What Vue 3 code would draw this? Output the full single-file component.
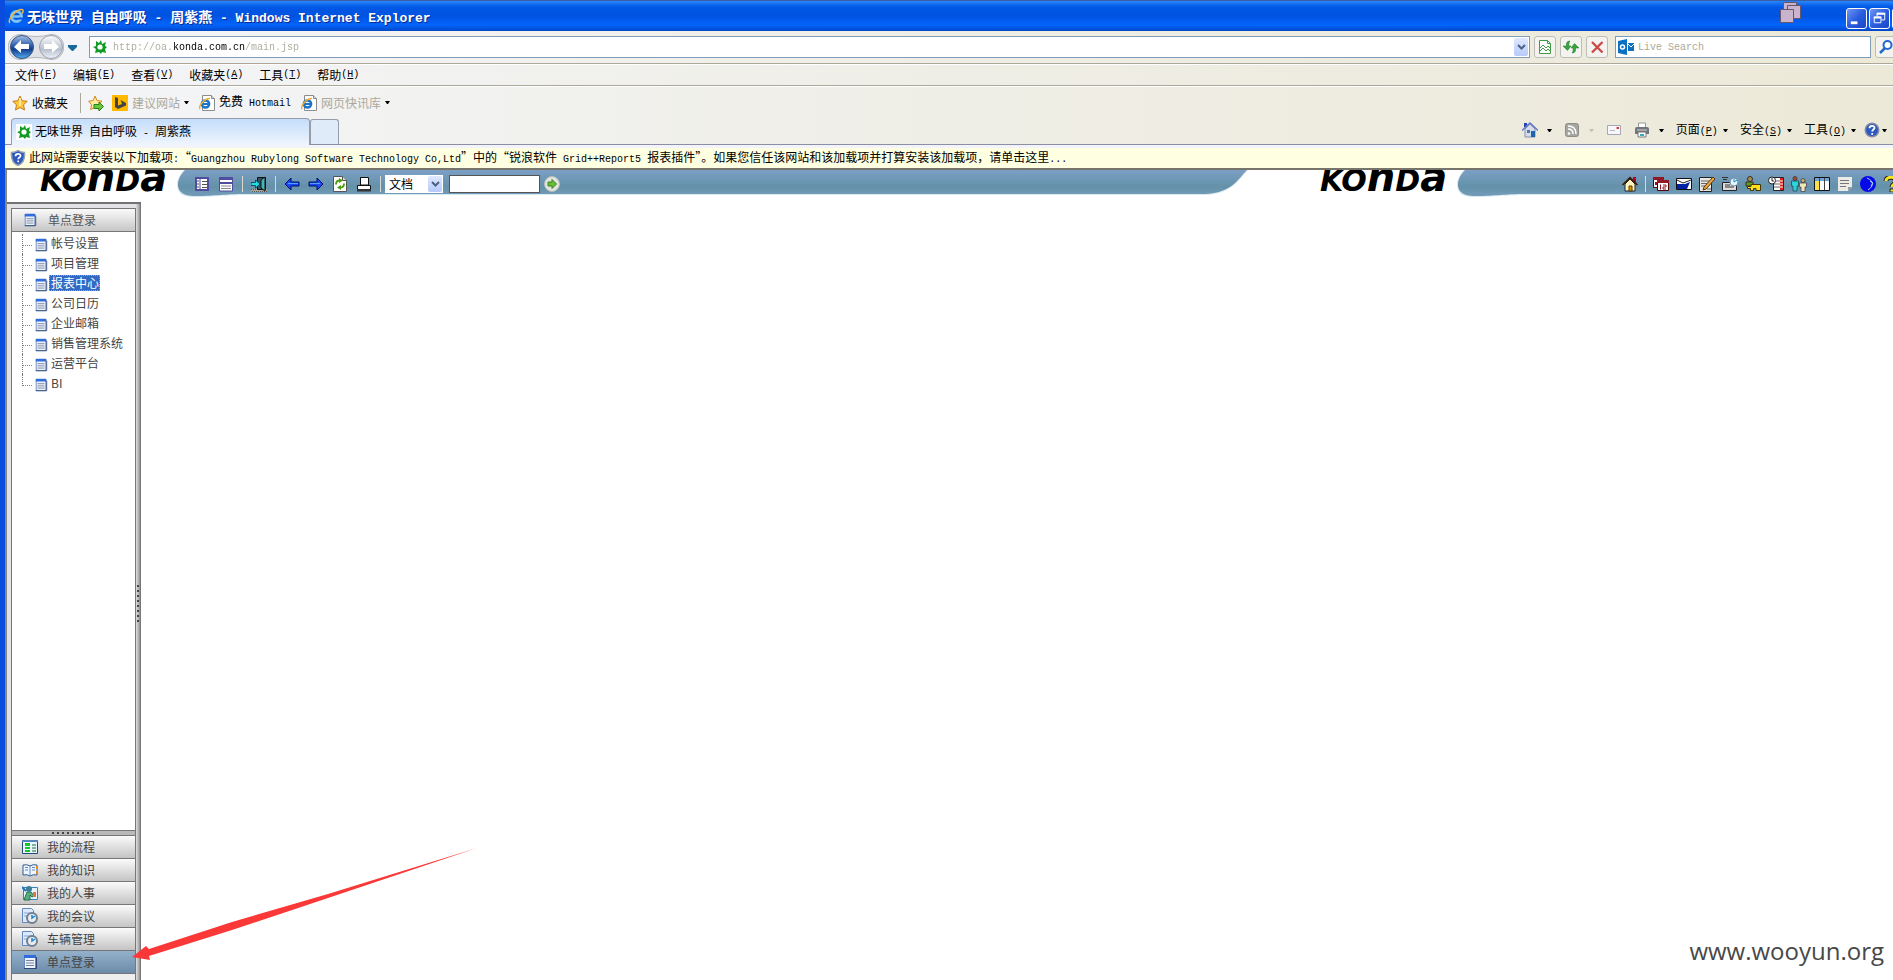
<script setup>
import { h, ref } from 'vue'

// Splits mixed text so that Latin runs sit on a half-width grid beside the Chinese.
const Mixed = (props) =>
  h('span', { class: 'mixed' }, props.text.split(/([\x20-\x7e]+)/).filter(Boolean).map((run) =>
    /^[\x20-\x7e]+$/.test(run) ? h('span', { class: 'latin' }, run) : run))
Mixed.props = ['text']

const art = {
  ie: '<circle cx="8.500" cy="8.500" r="5" fill="none" stroke="#7cc4f6" stroke-width="3"/><path d="M4 8.500h9.500" stroke="#7cc4f6" stroke-width="2.500"/><path d="M11 10.500h4" stroke="#0858e8" stroke-width="2"/><path d="M2 15C-1 12 8 1 14 1.500c2 .3 1 3 0 4" fill="none" stroke="#f0b73a" stroke-width="1.500"/>',
  iepage: '<path d="M3.500.5h9l3 3v12h-12z" fill="#fff" stroke="#8c8c8c"/><path d="M12.500.5v3h3" fill="#ddd" stroke="#8c8c8c"/><circle cx="6.500" cy="9" r="3.600" fill="none" stroke="#1974ca" stroke-width="2.500"/><path d="M3 9h7.500" stroke="#1974ca" stroke-width="2"/><path d="M1 14C-1 11 6 3 11 3.500" fill="none" stroke="#eead35" stroke-width="1.500"/>',
  site: '<rect width="16" height="16" fill="#fff"/><path d="M4 2l3 2 2-3 1 4 4-2-1 4 2 1-2 2 1 4-4-1-1 2-2-2-4 1 1-4-3-2 3-1z" fill="#119a24"/><circle cx="8" cy="8" r="2.600" fill="#fff"/>',
  star: '<path d="M8 1l2.200 4.700 5 .6-3.700 3.500 1 5.200L8 12.500 3.500 15l1-5.200L.8 6.300l5-.6z" fill="#ffc83b" stroke="#c77a13"/><path d="M8 3v8" stroke="#ffe79a" stroke-width="2"/>',
  starAdd: '<path d="M7 1l2 4.500 5 .7-3.500 3.300 1 5L7 12.500 2.700 14.500l.8-4.700L.7 6.200l4.500-.7z" fill="#ffe9a0" stroke="#d08a1c"/><path d="M6 9.500h5V7l4.500 4.500L11 16v-2.500H6z" fill="#68c83c" stroke="#23851c"/>',
  bing: '<rect width="16" height="16" fill="#ffb900"/><path d="M3 2l3 1v7.500L10 9 8.500 5 14 8v2.500L6 14l-3-2z" fill="#444"/>',
  home: '<path d="M2 1h3v4H2z" fill="#2442b8"/><path d="M3 7l5-5 5 5v8H3z" fill="#d4dcec" stroke="#8490ad"/><path d="M0 8.500L8 1l8 7.500" fill="none" stroke="#6878c8" stroke-width="1.500"/><path d="M9 9h4v6H9z" fill="#1f65ac"/><path d="M5 8h3v3H5z" fill="#5478a8"/>',
  rss: '<rect x="1.500" y="1.500" width="13" height="13" rx="2" fill="#a5a5a0" stroke="#8e8e89"/><circle cx="5" cy="11.500" r="1.300" fill="#fff"/><path d="M4 7c3 0 5 2 5 5M4 4c5 0 8 3 8 8" fill="none" stroke="#fff" stroke-width="1.500"/>',
  mail: '<path d="M1.500 3.500h13v9h-13z" fill="#f7f7fb" stroke="#a7a7b7"/><path d="M10.500 5h2.500v2h-2.500z" fill="#d83b37"/><path d="M4 8.500h5" stroke="#b8b8c4"/>',
  print: '<path d="M4.500 6V1h7v5" fill="#fff" stroke="#999"/><path d="M1 7q0-2 2-2h10q2 0 2 2v5H1z" fill="#70747b"/><path d="M3 8h10" stroke="#d3d5da"/><path d="M4 10h8v5H4z" fill="#fff" stroke="#777"/><path d="M6 13h4" stroke="#37a9b8" stroke-width="2"/>',
  help: '<circle cx="8" cy="8" r="7.500" fill="#858ea5"/><circle cx="8" cy="8" r="6" fill="#2c59bd"/><path d="M5.500 6.300C5.500 3 11 3.300 10.500 6c-.3 1.600-2.300 1.500-2.300 3.600M8.200 11v1.700" fill="none" stroke="#fff" stroke-width="1.800"/>',
  shield: '<path d="M8 .5c2 1.500 4 2 6.500 2 .5 6-1 11-6.500 13C2.500 13.500 1 8.500 1.500 2.500 4 2.500 6 2 8 .5z" fill="#2d5ac0" stroke="#9aa1b2" stroke-width="1.500"/><path d="M5.500 6.300C5.500 3 11 3.300 10.500 6c-.3 1.600-2.300 1.500-2.300 3.200M8.200 10.500v1.700" fill="none" stroke="#fff" stroke-width="1.700"/>',
  pageBroken: '<path d="M2.500 1.500h8l3 3v10h-11z" fill="#fff" stroke="#3e9b43"/><path d="M10.500 1.500v3h3M3 9l3-3 3 3 2-2 2 2M3 12l3-3 3 3 2-2 2 2" fill="none" stroke="#3e9b43"/>',
  swap: '<path d="M7 2C4 2 3 4 3.500 7H0l4.500 4.500L8 7H6c-.5-2 0-4 1-5zM9 14c3 0 4-2 3.500-5H16l-4.500-4.500L8 9h2c.5 2 0 4-1 5z" fill="#37a63b" stroke="#1d742a" stroke-width=".5"/>',
  stop: '<path d="M3 3l10.500 10.500M13.500 3L3 13.500" stroke="#c94a48" stroke-width="2.300"/>',
  outlook: '<path d="M0 2l9-2v16l-9-2z" fill="#0b6fc2"/><circle cx="4.500" cy="8" r="2" fill="none" stroke="#fff" stroke-width="1.500"/><path d="M10 4h6v8h-6z" fill="#0b6fc2"/><path d="M10 5l3 3 3-3" fill="none" stroke="#fff"/>',
  find: '<circle cx="9.500" cy="6" r="4" fill="#fff" stroke="#2467cf" stroke-width="2"/><path d="M7 9l-5 5" stroke="#2467cf" stroke-width="2.500"/>',
  listLeft: '<path d="M1 1h14v14H1z" fill="#fff"/><path d="M2 2h12v12H2z" fill="none" stroke="#504ca0" stroke-width="2"/><path d="M6 2v12" stroke="#504ca0"/><path d="M3 5h2M3 8h2M3 11h2M8 5.500h5M8 8.500h5M8 11.500h5" stroke="#555"/>',
  listTop: '<path d="M1 1h14v14H1z" fill="#fff"/><path d="M1 1h14v3H1zM1 6h14v2H1z" fill="#504ca0"/><path d="M1.500 2v13h13V2" fill="none" stroke="#504ca0"/><path d="M3 10h10M3 12.500h10" stroke="#888"/>',
  door: '<path d="M0 13h16v3H0z" fill="#aaa894"/><path d="M0 13.500h16M1 15.500h15" stroke="#555" stroke-dasharray="1 1"/><path d="M6.500 1.500h8v12h-8z" fill="#2c5560" stroke="#111"/><path d="M10 4l4-3v14l-4-3z" fill="#45b5b5" stroke="#111"/><path d="M0 6.500h4.500V4L9 8l-4.500 4V9.500H0z" fill="#1ee0e8" stroke="#123" stroke-width=".7"/>',
  left: '<path d="M1 8l6-6v4h8v4H7v4z" fill="#1649f5" stroke="#050c66"/><path d="M4 7.500h10" stroke="#54a0ff"/>',
  right: '<path d="M15 8L9 2v4H1v4h8v4z" fill="#1649f5" stroke="#050c66"/><path d="M2 7.500h10" stroke="#54a0ff"/>',
  refresh: '<path d="M1.500.5h9l4 4v11h-13z" fill="#fff" stroke="#555"/><path d="M10.500.5v4h4" fill="#ddd" stroke="#555"/><path d="M4 8.500C4 5.500 5 4.500 7.500 4.500M12 7.500c0 3-1 4-3.500 4" fill="none" stroke="#4e9c0c" stroke-width="1.800"/><path d="M7 2l4 2.500L7 7zM9 9v5l-4-2.500z" fill="#4e9c0c"/>',
  pagePrint: '<path d="M4.500 1.500h7v8h-7z" fill="#fff" stroke="#111"/><path d="M1.500 9.500h13v4h-13z" fill="#fff" stroke="#111"/><path d="M4.500 1.500h8v7.500h-8z" fill="#fff" stroke="#111"/><path d="M1 13h14v2.500H1z" fill="#333"/>',
  go: '<ellipse cx="8" cy="8" rx="7.500" ry="7.500" fill="#e3e3df" stroke="#b7bdb8"/><path d="M4 6h4V3.500L12.500 8 8 12.500V10H4z" fill="#6abb35" stroke="#36871e"/>',
  house: '<path d="M11 1h3v6h-3z" fill="#c80020"/><path d="M3 8l5-5 5 5v7H3z" fill="#fff3bd" stroke="#222"/><path d="M.5 9L8 1.500 15.500 9" fill="none" stroke="#3b1500" stroke-width="1.500"/><path d="M7 10h3v5H7z" fill="#d39c00" stroke="#5a3600"/>',
  calendar: '<path d="M.5 1.500h10v10H.5z" fill="#fff" stroke="#68000c"/><path d="M0 1h11v3H0zM2 6h2v3H2z" fill="#941725"/><path d="M4.500 4.500h11v10h-11z" fill="#fff" stroke="#4d0008"/><path d="M4 4h12v3H4z" fill="#941725"/><path d="M7.500 8.500v5M10 9h3v2h-3v2h3" fill="none" stroke="#941725"/>',
  letter: '<path d="M.5 2.500h15v11H.5z" fill="#fff" stroke="#111"/><path d="M1 4l6 3 8-3" fill="none" stroke="#222"/><path d="M1 8h8l5-2-3 7H1z" fill="#0020a8"/>',
  write: '<path d="M.5 1.500h12v14H.5z" fill="#e8e8e2" stroke="#222"/><path d="M2 5h8M2 7.500h6M2 10h4M8 13h4" stroke="#666"/><path d="M14 1l2 2-9 10-3 1 1-3z" fill="#eea73b" stroke="#583514"/>',
  timeCard: '<path d="M0 1.500h6M1 3.500h4" stroke="#333"/><path d="M.5 6.500h14v8H.5z" fill="#ddd" stroke="#222"/><path d="M3 9h5M3 11h9" stroke="#333"/><circle cx="12" cy="6" r="4" fill="#def6ff" stroke="#7b8ca0"/><path d="M12 3v3l3-2" fill="none" stroke="#1987c2"/>',
  boxes: '<circle cx="5" cy="3" r="2.500" fill="#a98a58" stroke="#332"/><path d="M1 6h7v4H1z" fill="#629b22" stroke="#332"/><path d="M2.500 10.500H6v-2h9.500v6H11v-2H8.500v2h-3v-2h-3z" fill="#ffdf20" stroke="#443500"/>',
  board: '<path d="M5.500 1.500h10v13h-10z" fill="#fff" stroke="#222"/><path d="M6 5h8M6 8h8M6 11h8" stroke="#666"/><path d="M12 2h3v12h-3z" fill="#e42018"/><path d="M12 5h3M12 8h3M12 11h3" stroke="#fff"/><circle cx="4" cy="4.500" r="3.500" fill="#fff" stroke="#222"/><path d="M4 2v3h2" fill="none" stroke="#222"/>',
  people: '<circle cx="4" cy="2.500" r="2" fill="#a8502c" stroke="#222" stroke-width=".6"/><path d="M.5 5h7v5H6v5H2v-5H.5z" fill="#2cd3da" stroke="#153d48" stroke-width=".7"/><circle cx="12" cy="4.500" r="2" fill="#d8ae64" stroke="#222" stroke-width=".6"/><path d="M8.500 7h7v4H14v4.500h-4V11H8.500z" fill="#f0e6b0" stroke="#3c3550" stroke-width=".7"/>',
  columns: '<path d="M.5 1.500h15v13H.5z" fill="#fff" stroke="#111"/><path d="M1 2h14v3H1z" fill="#6da5d8"/><path d="M1 5h5v9H1z" fill="#fae14d"/><path d="M5.500 2v12M10.500 2v12" stroke="#444"/>',
  note: '<path d="M1 1h14v10l-4 4H1z" fill="#eaeae7"/><path d="M15 11h-4v4z" fill="#999"/><path d="M3 4.500h9M3 7.500h9M3 10.500h6" stroke="#777"/>',
  moon: '<circle cx="8" cy="8" r="8" fill="#0709e6"/><path d="M7 2c7 3 7 8 1 12M10 5l3 2-2 3" fill="none" stroke="#a3d8ff"/>',
  question: '<path d="M3 5c0-5 10-5 10 0 0 3-4 3-4 6" fill="none" stroke="#222" stroke-width="5"/><path d="M3 5c0-5 10-5 10 0 0 3-4 3-4 6" fill="none" stroke="#f6e322" stroke-width="3"/><path d="M7 13h4v3H7z" fill="#f6e322" stroke="#222"/>',
  doc: '<path d="M2.500 1.500h11v13h-11z" fill="#edf2fb" stroke="#6485be"/><path d="M2 1h12v3H2z" fill="#326cdc"/><path d="M4 6.500h8M4 9h8M4 11.500h8" stroke="#74839e"/><path d="M2 14.500h12.500V3" fill="none" stroke="#2d4877"/>',
  flow: '<path d="M.5 1.500h15v13H.5z" fill="#e9f5ff" stroke="#224b76"/><path d="M0 1h16v2H0z" fill="#5a83bb"/><path d="M3 4h5v3H3zM3 8h5v2H3zM3 11h5v2H3z" fill="#18c626"/><path d="M10 6h4M10 9h4M10 12h4" stroke="#176c34"/>',
  book: '<path d="M1 3q4-1 7 1 3-2 7-1v10q-4-1-7 1-3-2-7-1z" fill="#edf6ff" stroke="#345b90"/><path d="M8 4v10M3 5.500h3M3 8h3M10 5.500h3M10 8h3" fill="none" stroke="#648abf"/><path d="M14 4h2v3h-2zM14 9h2v3h-2z" fill="#e68a26"/>',
  person: '<path d="M1.500 2.500h14v12h-14z" fill="#e6f3ff" stroke="#3c80c4"/><path d="M2 15l3-8h4l3 4-2 1-2-2v5z" fill="#5cae7c" stroke="#20754c"/><circle cx="7" cy="4" r="3" fill="#3c7f96"/><path d="M11 7h3v5h-3z" fill="#ee7136"/><path d="M0 2l4 4" stroke="#2475bd" stroke-width="2"/>',
  meeting: '<path d="M.5.5h9l2 2v12H.5z" fill="#dce9fb" stroke="#6288bc"/><path d="M2 5h7M2 8h3" stroke="#85a6d2"/><circle cx="10" cy="10" r="5" fill="#e9edf1" stroke="#718091" stroke-width="2"/><path d="M10 7v3l3-2" fill="none" stroke="#1c83d1" stroke-width="1.500"/>'
}
const Icon = (props) => h('svg', { class: 'icon', viewBox: '0 0 16 16', 'aria-hidden': 'true', innerHTML: art[props.name] })
Icon.props = ['name']
const Caret = () => h('svg', { class: 'caret', viewBox: '0 0 5 3', 'aria-hidden': 'true' }, [h('path', { d: 'M0 0h5L3 3H2z', fill: 'currentColor' })])

const menus = [['文件', 'F'], ['编辑', 'E'], ['查看', 'V'], ['收藏夹', 'A'], ['工具', 'T'], ['帮助', 'H']]
const pageTools = [['页面', 'P'], ['安全', 'S'], ['工具', 'O']]
const tree = ['帐号设置', '项目管理', '报表中心', '公司日历', '企业邮箱', '销售管理系统', '运营平台', 'BI']
const sections = [['flow', '我的流程'], ['book', '我的知识'], ['person', '我的人事'], ['meeting', '我的会议'], ['meeting', '车辆管理'], ['doc', '单点登录']]
const shortcuts = ['calendar', 'letter', 'write', 'timeCard', 'boxes', 'board', 'people', 'columns', 'note', 'moon', 'question']
const notice = '此网站需要安装以下加载项:“Guangzhou Rubylong Software Technology Co,Ltd”中的“锐浪软件 Grid++Report5 报表插件”。如果您信任该网站和该加载项并打算安装该加载项，请单击这里...'
const title = '无味世界 自由呼吸 - 周紫燕'
const url = ref('http://oa.konda.com.cn/main.jsp')
const live = ref('')
const keyword = ref('')
const selected = ref('报表中心')
const section = ref('单点登录')
</script>

<template>
  <div class="window">
    <header class="titlebar">
      <Icon name="ie" />
      <h1><Mixed :text="title + ' - Windows Internet Explorer'" /></h1>
      <svg class="stack" viewBox="0 0 22 22" aria-hidden="true"><g fill="#c9b3cd" stroke="#67576d"><path d="M3.500.5h13v13h-13z" /><path d="M7.500 3.500h13v13h-13z" /><path d="M.5 7.500h13v13H.5z" /></g></svg>
      <div class="winbtns">
        <button aria-label="最小化"><svg viewBox="0 0 20 20"><path d="M4 13h7v3H4z" fill="#fff" /></svg></button>
        <button aria-label="还原"><svg viewBox="0 0 20 20"><path d="M7.500 8V4.500h8v7H12M4.500 8.500h7v6h-7z" fill="none" stroke="#fff" /><path d="M7 5h9M4 9h8" stroke="#fff" stroke-width="2" /></svg></button>
        <button aria-label="关闭"></button>
      </div>
    </header>

    <div class="chrome">
      <div class="address-row">
        <div class="travel">
          <svg viewBox="0 0 56 26" aria-hidden="true">
            <defs>
              <linearGradient id="backFill" x2="0" y2="1"><stop stop-color="#a9bfe0" /><stop offset=".45" stop-color="#2a5cae" /><stop offset=".6" stop-color="#123c8c" /><stop offset="1" stop-color="#51b1f2" /></linearGradient>
              <linearGradient id="nextFill" x2="0" y2="1"><stop stop-color="#fdfdff" /><stop offset=".6" stop-color="#b6bfcc" /><stop offset="1" stop-color="#eef3fa" /></linearGradient>
            </defs>
            <path d="M13 .5q15 4 30 0c17 0 17 25 0 25q-15-4-30 0c-17 0-17-25 0-25z" fill="#e0e2e6" stroke="#b2b5bb" />
            <circle cx="14" cy="13" r="11.500" fill="url(#backFill)" stroke="#3c5685" /><circle cx="43" cy="13" r="11.500" fill="url(#nextFill)" stroke="#9ba2ae" />
            <path d="M6 13l7-7v4h8v5h-8v4zM51 13l-7-7v4h-8v5h8v4z" fill="#fff" />
          </svg>
          <button aria-label="后退"></button><button aria-label="前进"></button>
        </div>
        <button class="recent" aria-label="最近浏览的页面"><svg viewBox="0 0 9 6"><path d="M0 0h9v2L5 6H4L0 2z" fill="#17699b" /></svg></button>
        <div class="field address">
          <Icon name="site" />
          <input v-model="url" class="url" aria-label="地址">
          <button class="drop" aria-label="显示地址列表"><svg viewBox="0 0 9 6"><path d="M1 1l3.500 3.500L8 1" fill="none" stroke="#4d6185" stroke-width="2" /></svg></button>
        </div>
        <button class="square first" aria-label="兼容性视图"><Icon name="pageBroken" /></button>
        <button class="square" aria-label="刷新"><Icon name="swap" /></button>
        <button class="square" aria-label="停止"><Icon name="stop" /></button>
        <div class="field search"><Icon name="outlook" /><input v-model="live" placeholder="Live Search" aria-label="Live Search"></div>
        <button class="square last" aria-label="搜索"><Icon name="find" /></button>
      </div>

      <nav class="menus">
        <button v-for="m in menus" :key="m[1]">{{ m[0] }}<span class="latin">(<u>{{ m[1] }}</u>)</span></button>
      </nav>

      <div class="favorites">
        <button class="fav"><Icon name="star" />收藏夹</button>
        <i class="rule"></i>
        <button class="add" aria-label="添加到收藏夹栏"><Icon name="starAdd" /></button>
        <button class="link dim"><Icon name="bing" />建议网站<Caret /></button>
        <button class="link"><Icon name="iepage" /><Mixed text="免费 Hotmail" /></button>
        <button class="link dim"><Icon name="iepage" />网页快讯库<Caret /></button>
      </div>

      <div class="tab-row">
        <button class="tab"><Icon name="site" /><Mixed :text="title" /></button>
        <button class="newtab" aria-label="新选项卡"></button>
        <div class="commands">
          <button aria-label="主页"><Icon name="home" /><Caret /></button>
          <button aria-label="源" class="faded"><Icon name="rss" /><Caret /></button>
          <button aria-label="阅读邮件"><Icon name="mail" /></button>
          <button aria-label="打印"><Icon name="print" /><Caret /></button>
          <button v-for="m in pageTools" :key="m[1]" class="worded"><span>{{ m[0] }}<span class="latin">(<u>{{ m[1] }}</u>)</span></span><Caret /></button>
          <button aria-label="帮助" class="helpbtn"><Icon name="help" /><Caret /></button>
        </div>
      </div>
    </div>

    <button class="notice"><Icon name="shield" /><Mixed :text="notice" /></button>

    <div class="page">
      <div class="banner">
        <div class="half main-half">
          <svg class="logo" viewBox="0 0 136 28" role="img" aria-label="KONDA"><text x="0" y="21">KO<tspan class="tall">n</tspan>D<tspan class="tall">a</tspan></text></svg>
          <svg class="cap" viewBox="0 0 70 28" aria-hidden="true">
            <defs><linearGradient id="band" gradientUnits="userSpaceOnUse" x1="0" x2="0" y1="0" y2="24"><stop stop-color="#7c9fc5" /><stop offset=".7" stop-color="#6391a8" /><stop offset="1" stop-color="#7299b7" /></linearGradient></defs>
            <path d="M8 0C3 5-2 14 3 22c3 4 8 5 17 5 20 0 28-2 50-2V0z" fill="#d9ebee" /><path d="M9 0C4 5-1 14 4 21c3 4 8 5 16 5 20 0 28-2 50-2V0z" fill="url(#band)" /></svg>
          <div class="band">
            <div class="tools">
              <button aria-label="左侧菜单"><Icon name="listLeft" /></button>
              <button aria-label="顶部菜单"><Icon name="listTop" /></button>
              <i class="rule"></i>
              <button aria-label="退出"><Icon name="door" /></button>
              <i class="rule"></i>
              <button aria-label="后退"><Icon name="left" /></button>
              <button aria-label="前进"><Icon name="right" /></button>
              <button aria-label="刷新"><Icon name="refresh" /></button>
              <button aria-label="打印"><Icon name="pagePrint" /></button>
              <i class="rule"></i>
              <div class="kind"><select aria-label="搜索类型"><option>文档</option></select><span class="drop"><svg viewBox="0 0 9 6"><path d="M1 1l3.500 3.500L8 1" fill="none" stroke="#4d6185" stroke-width="2" /></svg></span></div>
              <input v-model="keyword" class="keyword" aria-label="关键字">
              <button class="go" aria-label="搜索"><Icon name="go" /></button>
            </div>
          </div>
          <svg class="tail" viewBox="0 0 60 28" aria-hidden="true"><path d="M0 0h53C44 9 38 24 10 25H0z" fill="#d9ebee" /><path d="M0 0h52C43 9 37 23 10 24H0z" fill="url(#band)" /></svg>
        </div>
        <div class="half side-half">
          <svg class="logo" viewBox="0 0 136 28" role="img" aria-label="KONDA"><text x="0" y="21">KO<tspan class="tall">n</tspan>D<tspan class="tall">a</tspan></text></svg>
          <svg class="cap" viewBox="0 0 70 28" aria-hidden="true"><path d="M8 0C3 5-2 14 3 22c3 4 8 5 17 5 20 0 28-2 50-2V0z" fill="#d9ebee" /><path d="M9 0C4 5-1 14 4 21c3 4 8 5 16 5 20 0 28-2 50-2V0z" fill="url(#band)" /></svg>
          <div class="band">
            <div class="shortcuts">
              <button aria-label="首页"><Icon name="house" /></button>
              <i class="rule"></i>
              <button v-for="s in shortcuts" :key="s" :aria-label="s"><Icon :name="s" /></button>
            </div>
          </div>
        </div>
      </div>

      <div class="body">
        <aside class="sidebar">
          <div class="panel">
            <h2><Icon name="doc" />单点登录</h2>
            <ul class="tree">
              <li v-for="t in tree" :key="t"><i class="branch"></i><a href="#" :class="{ on: t === selected }" @click.prevent="selected = t"><Icon name="doc" /><span>{{ t }}</span></a></li>
            </ul>
            <div class="grip"><i></i></div>
            <nav class="sections">
              <button v-for="s in sections" :key="s[1]" :class="{ current: s[1] === section }" @click="section = s[1]"><Icon :name="s[0]" />{{ s[1] }}</button>
              <div class="more"></div>
            </nav>
          </div>
          <div class="handle"><i></i></div>
        </aside>
        <main></main>
      </div>
    </div>

    <svg class="pointer" viewBox="0 0 346 114" aria-hidden="true"><path d="M345 1L196 47 100 75 17 102 14 99 0 110 18 113 17 109 100 83 196 51z" fill="#fb3838" /></svg>
    <div class="watermark">www.wooyun.org</div>
  </div>
</template>

<style>
body { margin: 0; overflow: hidden; }
.mixed { white-space: pre; }
.latin { font-family: "Liberation Mono", monospace; font-size: 10px; }
.icon { width: 16px; height: 16px; flex: none; display: block; }
.caret { width: 5px; height: 3px; flex: none; color: #000; }
</style>

<style scoped>
.window { position: relative; box-sizing: border-box; height: 100vh; display: flex; flex-direction: column; overflow: hidden; border-left: 5px solid #0a4be0; background: #fff; color: #000; font: 12px/16px "Noto Sans CJK SC", "Liberation Sans", sans-serif; }
.window::before { content: ""; position: absolute; left: -5px; top: 0; bottom: 0; width: 1px; background: #83c3d5; }
button { padding: 0; border: 0; background: none; color: inherit; font: inherit; display: flex; align-items: center; flex: none; white-space: nowrap; }
input, select { box-sizing: border-box; min-width: 0; border: 0; outline: 0; padding: 0; background: #fff; font: inherit; }
h1, h2, ul { margin: 0; padding: 0; }

.titlebar { height: 31px; flex: none; display: flex; align-items: center; padding-left: 3px; overflow: hidden; box-sizing: border-box; border-top: 1px solid #3a5fa5; background: linear-gradient(#2a86f8, #0058e6 20%, #0053e0 50%, #0364fb 80%, #0148c8); }
.titlebar h1 { flex: 1; margin-left: 3px; padding-top: 3px; color: #fff; font-size: 14px; line-height: 20px; font-weight: 700; text-shadow: 1px 1px #0a2a90; }
.titlebar h1 :deep(.latin) { font-size: 13px; }
.stack { width: 22px; height: 22px; margin: -6px 44px 0 0; }
.winbtns { display: flex; gap: 2px; margin-right: -20px; padding-top: 5px; }
.winbtns button { box-sizing: border-box; width: 21px; height: 21px; border: 1px solid #fff; border-radius: 3px; background: linear-gradient(135deg, #7295f0, #2a5de0 50%, #1b47c4); }

.chrome { flex: none; background: linear-gradient(90deg, #f4f5f9, #efeee6 50%, #ece9d8); }
.address-row, .menus { border-bottom: 1px solid #aca899; }
.address-row { height: 32px; display: flex; align-items: center; padding-left: 3px; overflow: hidden; }
.travel { position: relative; width: 56px; height: 26px; display: flex; }
.travel svg { position: absolute; inset: 0; }
.travel button { flex: 1; height: 26px; position: relative; }
.recent { margin: 2px 12px 0 4px; }
.recent svg, .drop svg { width: 9px; height: 6px; }
.field { box-sizing: border-box; height: 22px; display: flex; align-items: center; border: 1px solid #7f9db9; background: #fff; }
.field input { flex: 1; padding-top: 2px; font: 10px/16px "Liberation Mono", monospace; }
.address { flex: 1; padding: 0 1px 0 2px; }
.address .url { margin-left: 5px; color: transparent; background: linear-gradient(90deg, #aca899 60px, #000 60px, #000 132px, #aca899 132px); background-clip: text; -webkit-background-clip: text; }
.drop { width: 14px; height: 18px; display: flex; align-items: center; justify-content: center; border-radius: 2px; background: linear-gradient(#dfe8fe, #b6cafa); }
.square { box-sizing: border-box; width: 22px; height: 22px; margin-right: 4px; justify-content: center; border: 1px solid #bdbdb8; border-radius: 3px; background: #f4f3f0; }
.square.first { margin-left: 4px; }
.search { width: 256px; margin: 0 4px 0 3px; padding-left: 2px; }
.search input { margin-left: 4px; }
.search input::placeholder { color: #aca899; opacity: 1; }
.square.last { margin-right: -4px; }

.menus { height: 20px; display: flex; gap: 16px; padding-left: 10px; border-top: 1px solid #fff; }
.favorites { box-sizing: border-box; height: 32px; display: flex; align-items: center; padding-left: 7px; border-top: 1px solid #fff; }
.fav { gap: 4px; }
.favorites .rule { width: 1px; height: 20px; margin: 0 7px 0 12px; background: #aca899; }
.add { margin-right: 8px; }
.link { gap: 4px; margin-right: 10px; }
.dim { color: #aca899; }

.tab-row { height: 26px; display: flex; align-items: flex-end; padding-left: 6px; border-bottom: 1px solid #8c8fa3; box-shadow: 0 3px #f3f4fb; margin-bottom: 3px; }
.tab { box-sizing: border-box; width: 299px; height: 27px; margin-bottom: -1px; padding-left: 4px; gap: 3px; border: 1px solid #979caa; border-bottom: 0; border-radius: 4px 4px 0 0; background: linear-gradient(#c4ddfb, #eff5fd); }
.newtab { box-sizing: border-box; width: 29px; height: 25px; border: 1px solid #979caa; border-bottom: 0; border-radius: 3px 3px 0 0; background: #dfebf9; }
.commands { align-self: center; display: flex; align-items: center; margin-left: auto; padding: 0 6px 2px 0; }
.commands button { gap: 9px; margin-right: 12px; }
.commands .worded { gap: 5px; }
.commands .helpbtn { gap: 2px; margin: 0 0 0 -4px; }
.faded .caret { color: #c5c2b4; }

.notice { height: 20px; padding-left: 5px; gap: 3px; background: #ffffe1; overflow: hidden; }

.page { flex: 1; min-height: 0; display: flex; flex-direction: column; border-top: 2px solid #77756b; border-left: 2px solid #8a887e; }
.banner { height: 32px; flex: none; display: flex; }
.half { display: flex; overflow: hidden; }
.main-half { flex: 1; padding-left: 33px; }
.side-half { width: 573px; }
.logo { width: 136px; height: 28px; flex: none; }
.logo text { font: italic 700 30px "DejaVu Sans", sans-serif; fill: #000; }
.logo .tall { font-size: 40px; }
.cap { width: 70px; height: 28px; flex: none; }
.band { flex: 1; min-width: 0; height: 24px; border-bottom: 1px solid #d9ebee; background: linear-gradient(#7c9fc5, #6391a8 70%, #7299b7); }
.tail { width: 60px; height: 28px; flex: none; margin-right: 65px; }
.tools, .shortcuts { height: 24px; display: flex; align-items: center; padding-top: 4px; box-sizing: border-box; }
.tools { position: relative; gap: 8px; margin-left: -52px; }
.band .rule { width: 1px; height: 16px; background: #d8d8d4; flex: none; }
.kind { position: relative; width: 58px; height: 18px; margin-left: -4px; }
.kind select { appearance: none; width: 100%; height: 18px; padding-left: 4px; border-radius: 0; line-height: 16px; }
.kind .drop { position: absolute; right: 1px; top: 1px; height: 16px; pointer-events: none; }
.keyword { width: 91px; height: 18px; margin-left: -2px; border: 1px solid #555; }
.go { margin-left: -4px; }
.shortcuts { justify-content: flex-end; gap: 7px; margin-right: -6px; }

.body { flex: 1; min-height: 0; display: flex; }
main { flex: 1; background: #fff; }
.sidebar { box-sizing: border-box; width: 134px; display: flex; border-top: 2px solid #737373; background: #e2e2e6; padding-left: 4px; }
.panel { flex: 1; min-width: 0; display: flex; flex-direction: column; margin-top: 4px; border: 1px solid #777; border-bottom: 0; background: #fff; color: #444; }
.panel h2 { display: flex; align-items: center; height: 22px; padding-left: 10px; gap: 10px; border-bottom: 1px solid #777; background: linear-gradient(#fafafa, #c6c6c6); color: #555; font-size: 12px; font-weight: 400; }
.panel h2 .icon { height: 14px; }
.tree { flex: 1; min-height: 0; padding-top: 2px; list-style: none; overflow: hidden; }
.tree li { display: flex; height: 20px; margin-left: 10px; }
.branch { box-sizing: border-box; width: 11px; height: 20px; border-left: 1px dotted #777; background: linear-gradient(90deg, #888 50%, transparent 50%) 0 11px / 2px 1px repeat-x; }
.tree li:last-child { height: 18px; }
.tree li:last-child .branch { height: 12px; }
.tree a { display: flex; align-items: flex-start; color: #444; text-decoration: none; line-height: 14px; }
.tree a .icon { margin-top: 4px; height: 14px; }
.tree a span { margin-top: 1px; border: 1px solid transparent; padding-left: 1px; white-space: nowrap; }
.tree .on span { border: 1px dotted #e39b3a; background: #316ac5; color: #fff; }
.grip { height: 4px; flex: none; display: flex; align-items: center; justify-content: center; border-top: 1px solid #777; border-bottom: 1px solid #777; background: #b9b9b9; }
.grip i { width: 43px; height: 2px; background: linear-gradient(90deg, #444 2px, transparent 2px) 0 0 / 5px 2px; }
.sections { flex: none; }
.sections button { box-sizing: border-box; width: 100%; height: 23px; padding-left: 10px; gap: 9px; border-bottom: 1px solid #777; background: linear-gradient(#fbfbfb, #c4c4c4); }
.sections .current { background: linear-gradient(#94b1cc, #6c8ba9); }
.more { height: 6px; background: #eee; }
.handle { box-sizing: border-box; width: 5px; flex: none; display: flex; align-items: center; padding-top: 24px; background: linear-gradient(90deg, #ddd, #aaa 60%, #666); }
.handle i { width: 2px; height: 38px; margin-left: 1px; background: linear-gradient(#444 2px, transparent 2px) 0 0 / 2px 5px; }

.pointer { position: absolute; left: 127px; bottom: 19px; width: 346px; height: 114px; pointer-events: none; }
.watermark { position: absolute; right: 9px; bottom: 12px; color: #484848; font: 24px/34px "Open Sans", "Noto Sans", sans-serif; }
</style>
